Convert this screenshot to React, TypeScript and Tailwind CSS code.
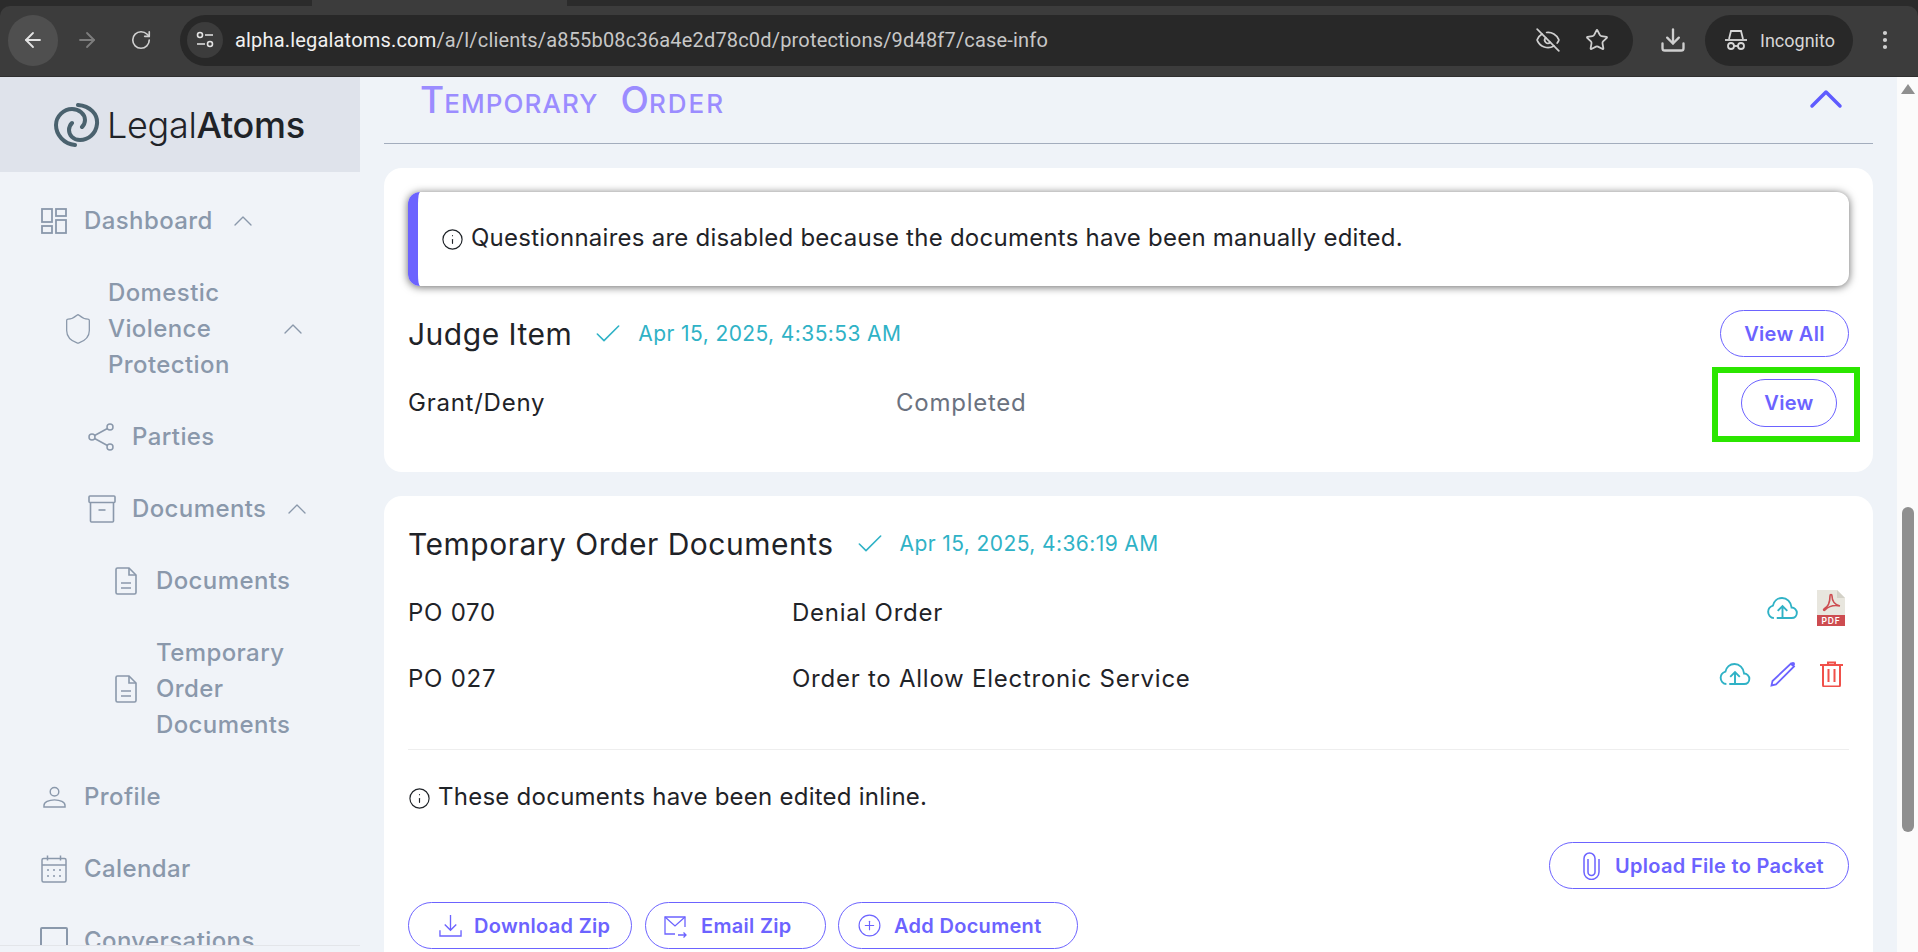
import React from 'react';
import { ArrowLeft, ArrowRight, Check, ChevronUp, Download, EyeOff, Info, MoreVertical, PlusCircle, RotateCw, Shield, Star } from 'lucide-react';

type IconProps = { className?: string };

function DashboardIcon({ className }: IconProps) {
  return (
    <svg viewBox="0 0 26 26" fill="none" stroke="currentColor" strokeWidth="1.8" className={className}>
      <rect x="1" y="1" width="10" height="13" />
      <rect x="15" y="1" width="10" height="7" />
      <rect x="1" y="18" width="10" height="7" />
      <rect x="15" y="12" width="10" height="13" />
    </svg>
  );
}

function PartiesIcon({ className }: IconProps) {
  return (
    <svg viewBox="0 0 26 28" fill="none" stroke="currentColor" strokeWidth="1.5" className={className}>
      <circle cx="4" cy="14" r="3" />
      <circle cx="22" cy="4" r="3" />
      <circle cx="22" cy="24" r="3" />
      <path d="M6.600 12.500L19.400 5.500M6.600 15.500L19.400 22.500" />
    </svg>
  );
}

function ArchiveIcon({ className }: IconProps) {
  return (
    <svg viewBox="0 0 28 28" fill="none" stroke="currentColor" strokeWidth="1.6" className={className}>
      <rect x="1" y="1" width="26" height="6.500" rx="1" />
      <path d="M2.500 7.500V26a1 1 0 0 0 1 1h21a1 1 0 0 0 1-1V7.500" />
      <path d="M10.500 15h7" />
    </svg>
  );
}

function DocIcon({ className }: IconProps) {
  return (
    <svg viewBox="0 0 22 28" fill="none" stroke="currentColor" strokeWidth="1.6" className={className}>
      <path d="M14 1H2.500A1.500 1.500 0 0 0 1 2.500v23A1.500 1.500 0 0 0 2.500 27h17a1.500 1.500 0 0 0 1.500-1.500V8z" />
      <path d="M14 1v7h7" />
      <path d="M6 16h10M6 21h10" />
    </svg>
  );
}

function ProfileIcon({ className }: IconProps) {
  return (
    <svg viewBox="0 0 24 23" fill="none" stroke="currentColor" strokeWidth="1.5" className={className}>
      <circle cx="12" cy="6" r="4.500" />
      <path d="M1 22v-1.500C1 17 6 14.500 12 14.500s11 2.500 11 6V22z" />
    </svg>
  );
}

function CalendarIcon({ className }: IconProps) {
  return (
    <svg viewBox="0 0 26 28" fill="none" stroke="currentColor" strokeWidth="1.5" className={className}>
      <rect x="1" y="3.500" width="24" height="23.500" rx="1.500" />
      <path d="M1 10h24M6.500 0.500v5M19.500 0.500v5" />
      <path d="M7 15h.01M13 15h.01M19 15h.01M7 21h.01M13 21h.01M19 21h.01" strokeWidth="2" strokeLinecap="round" />
    </svg>
  );
}

function Logo() {
  return (
    <svg viewBox="0 0 46 44" fill="none" stroke="#4a626e" strokeWidth="4" strokeLinecap="round" className="w-[46px] h-[44px]">
      <path d="M24 2C36 3 44 11 43 21C42 31 34 37 26 37C19 37 15 32 15 27C15 24 16 22 18 20" />
      <path d="M21 42C10 41 2 32 2 22C2 13 10 6 18 6C25 6 31 11 31 17C31 20 30 22 28 24" />
    </svg>
  );
}

function CloudIcon({ className }: IconProps) {
  return (
    <svg viewBox="0 0 32 23" fill="none" stroke="#2fb2c6" strokeWidth="2" className={className}>
      <path d="M10 22H25.500C29 22 31 19.500 31 16.500C31 13.500 28.500 11 25.500 11C25 5 20.500 1 15.500 1C10.500 1 7 4.500 6 9C3 10 1 12.500 1 15.500C1 19 3.500 22 7 22" />
      <path d="M16 22V10M11 14.500L16 9.500L21 14.500" />
    </svg>
  );
}

function PenIcon({ className }: IconProps) {
  return (
    <svg viewBox="0 0 26 26" fill="none" stroke="#6c63ff" strokeWidth="1.800" className={className}>
      <path d="M21 2.500L24 5.500L6 23.500L1.500 24.500L2.500 20z" />
      <circle cx="23" cy="3" r="2" fill="#6c63ff" stroke="none" />
    </svg>
  );
}

function TrashIcon({ className }: IconProps) {
  return (
    <svg viewBox="0 0 23 26" fill="none" stroke="#f0504a" strokeWidth="2" className={className}>
      <path d="M0 4H23M8 4V1.500H15V4" />
      <path d="M3 4V24a1.500 1.500 0 0 0 1.500 1.500H18.500a1.500 1.500 0 0 0 1.500-1.500V4" />
      <path d="M8.500 8V21M14.500 8V21" />
    </svg>
  );
}

function ClipIcon({ className }: IconProps) {
  return (
    <svg viewBox="0 0 17 28" fill="none" stroke="currentColor" strokeWidth="1.500" className={className}>
      <path d="M16 7V20a7.500 7.500 0 0 1-15 0V6.500a5.500 5.500 0 0 1 11 0V20a3.500 3.500 0 0 1-7 0V7" />
    </svg>
  );
}

function PdfIcon() {
  return (
    <svg viewBox="0 0 28 36" className="w-[28px] h-[36px]">
      <path d="M0 0h20l8 8v28H0z" fill="#e8e6de" />
      <path d="M20 0l8 8h-8z" fill="#d3d1c7" />
      <rect y="25" width="28" height="11" fill="#cd4c50" />
      <path d="M7 19c4-2 6-6 6-13 0-2 2-2 2 0 0 5 3 9 8 10-5-1-11 0-15 4-1 1-2 0-1-1z" fill="none" stroke="#cd4c50" strokeWidth="1.600" />
      <text x="14" y="34" textAnchor="middle" fill="#fff" fontSize="8.500" fontWeight="600" fontFamily="Inter, sans-serif">PDF</text>
    </svg>
  );
}

function EmailZipIcon({ className }: IconProps) {
  return (
    <svg viewBox="0 0 24 24" fill="none" stroke="currentColor" strokeWidth="1.300" className={className}>
      <path d="M12 20H2V3h20v10" />
      <path d="M2 3l10 9 10-9" />
      <path d="M15 21h8M20.500 18.500L23 21l-2.500 2.500" />
    </svg>
  );
}

function DownloadZipIcon({ className }: IconProps) {
  return (
    <svg viewBox="0 0 24 24" fill="none" stroke="currentColor" strokeWidth="1.400" className={className}>
      <path d="M12 1v16M6 11l6 6 6-6" />
      <path d="M1 17v6h22v-6" />
    </svg>
  );
}

function TuneIcon() {
  return (
    <svg viewBox="0 0 20 20" fill="none" stroke="#e3e3e3" strokeWidth="1.600" className="w-[20px] h-[20px]">
      <circle cx="5" cy="5" r="2.500" />
      <path d="M10 5h8M2 14h8" />
      <circle cx="15" cy="14" r="2.500" />
    </svg>
  );
}

function IncognitoIcon() {
  return (
    <svg viewBox="0 0 24 24" fill="none" stroke="#d6d6d6" strokeWidth="1.800" className="w-[24px] h-[24px]">
      <path d="M1 12h22" />
      <path d="M5 11l2-8h10l2 8" />
      <circle cx="7" cy="18" r="3" />
      <circle cx="17" cy="18" r="3" />
      <path d="M10 18h4" />
    </svg>
  );
}

const navText = 'text-[24px] leading-[36px] font-medium tracking-[0.4px]';
const btn = 'flex items-center rounded-full border border-[#6c63ff] text-[#6c63ff] text-[20px] font-semibold tracking-[0.3px] h-[47px] bg-white';
const dateText = 'text-[21px] tracking-[0.4px] text-[#2fb2c6]';
const rowText = 'text-[24px] tracking-[0.75px] text-[#1f2328]';
const noteText = 'text-[24px] tracking-[0.25px] text-[#1f2328]';
const titleText = 'text-[30px] leading-[40px] tracking-[0.5px] text-[#1f2328]';

type NavRowProps = { icon: React.ReactNode; label: string; indent: string; iconBox: string; chevron?: string; textWidth?: string };

function NavRow({ icon, label, indent, iconBox, chevron, textWidth }: NavRowProps) {
  return (
    <div className={`flex items-center py-[18px] ${indent}`}>
      <div className={`${iconBox} shrink-0 flex items-center`}>{icon}</div>
      <div className={`${navText} ${textWidth ?? ''}`}>{label}</div>
      {chevron && <ChevronUp className={`w-[32px] h-[32px] ${chevron}`} strokeWidth={1} />}
    </div>
  );
}

function Sidebar() {
  return (
    <div className="w-[360px] shrink-0 h-[875px] flex flex-col text-[#8a98ab]">
      <div className="h-[95px] shrink-0 bg-[#dfe3eb] flex items-center pl-[54px] gap-[7px]">
        <Logo />
        <div className="text-[36px] tracking-[-0.3px] text-[#1f2328]">
          <span className="font-light">Legal</span><span className="font-medium">Atoms</span>
        </div>
      </div>
      <div className="h-[774px] overflow-hidden border-b border-[#e3e5e9] pt-[13px]">
        <NavRow indent="pl-[41px]" iconBox="w-[43px]" label="Dashboard" chevron="ml-[14px]" icon={<DashboardIcon className="w-[26px] h-[26px]" />} />
        <NavRow indent="pl-[61px]" iconBox="w-[47px]" label="Domestic Violence Protection" textWidth="w-[156px]" chevron="ml-[13px]" icon={<Shield className="w-[34px] h-[34px]" strokeWidth={0.900} />} />
        <NavRow indent="pl-[88px]" iconBox="w-[44px]" label="Parties" icon={<PartiesIcon className="w-[26px] h-[28px]" />} />
        <NavRow indent="pl-[88px]" iconBox="w-[44px]" label="Documents" chevron="ml-[15px]" icon={<ArchiveIcon className="w-[28px] h-[28px]" />} />
        <NavRow indent="pl-[115px]" iconBox="w-[41px]" label="Documents" icon={<DocIcon className="w-[22px] h-[28px]" />} />
        <NavRow indent="pl-[115px]" iconBox="w-[41px]" label="Temporary Order Documents" textWidth="w-[140px]" icon={<DocIcon className="w-[22px] h-[28px]" />} />
        <NavRow indent="pl-[43px]" iconBox="w-[41px]" label="Profile" icon={<ProfileIcon className="w-[23px] h-[22px]" />} />
        <NavRow indent="pl-[41px]" iconBox="w-[43px]" label="Calendar" icon={<CalendarIcon className="w-[26px] h-[28px]" />} />
        <div className="flex items-center py-[18px] pl-[40px]">
          <div className="w-[44px] shrink-0">
            <div className="w-[28px] h-[28px] border-2 border-[#8a98ab] rounded-[2px]" />
          </div>
          <div className={navText}>Conversations</div>
        </div>
      </div>
    </div>
  );
}

function BrowserBar() {
  return (
    <div className="h-[77px] bg-[#2b2b2b] flex flex-col shrink-0 [font-family:Roboto,sans-serif]">
      <div className="h-[6px] flex">
        <div className="w-[312px] bg-[#2b2b2b]" />
        <div className="w-[255px] bg-[#3c3c3c]" />
        <div className="flex-1 bg-[#2b2b2b]" />
      </div>
      <div className="h-[71px] bg-[#3c3c3c] rounded-t-[10px] flex items-center border-b border-[#2f2f2f] pl-[8px] pb-[2px]">
        <div className="w-[50px] h-[51px] rounded-full bg-[#4f4f4f] flex items-center justify-center">
          <ArrowLeft className="w-[24px] h-[24px] text-[#e3e3e3]" strokeWidth={1.800} />
        </div>
        <ArrowRight className="w-[24px] h-[24px] text-[#7d7d7d] ml-[17px]" strokeWidth={1.800} />
        <RotateCw className="w-[22px] h-[22px] text-[#d0d0d0] ml-[31px]" strokeWidth={1.800} />
        <div className="ml-[28px] w-[1453px] h-[51px] rounded-full bg-[#282828] flex items-center pl-[7px]">
          <div className="w-[36px] h-[36px] rounded-full bg-[#3c3c3c] flex items-center justify-center">
            <TuneIcon />
          </div>
          <div className="ml-[12px] text-[20px] tracking-[0.18px] text-[#c7c7c7] flex-1 whitespace-nowrap">
            <span className="text-[#f0f0f0]">alpha.legalatoms.com</span>/a/l/clients/a855b08c36a4e2d78c0d/protections/9d48f7/case-info
          </div>
          <EyeOff className="w-[26px] h-[26px] text-[#cfcfcf]" strokeWidth={1.600} />
          <Star className="w-[24px] h-[24px] text-[#cfcfcf] ml-[24px] mr-[24px]" strokeWidth={1.800} />
        </div>
        <Download className="w-[28px] h-[28px] text-[#cfcfcf] ml-[26px]" strokeWidth={2} />
        <div className="ml-[18px] w-[148px] h-[51px] rounded-full bg-[#282828] flex items-center pl-[19px] gap-[12px] text-[18px] text-[#d6d6d6]">
          <IncognitoIcon />
          Incognito
        </div>
        <MoreVertical className="w-[24px] h-[24px] text-[#cfcfcf] ml-[20px]" strokeWidth={2.200} />
      </div>
    </div>
  );
}

function Main() {
  return (
    <div className="flex-1 h-[875px] overflow-hidden bg-[#eff3f8] px-[24px]">
      <div className="h-[67px] border-b border-[#a3adbd] flex items-start justify-between pl-[36px] pr-[19px]">
        <div className="flex items-baseline leading-[44px] font-medium text-[#9b8cff] pt-[1px]">
          <span className="text-[37px]">T</span>
          <span className="text-[26px] uppercase tracking-[1.100px]">emporary</span>
          <span className="text-[37px] ml-[22px]">O</span>
          <span className="text-[26px] uppercase tracking-[2px]">rder</span>
        </div>
        <ChevronUp className="w-[56px] h-[56px] text-[#5f5bff] mt-[-6px]" strokeWidth={1.500} />
      </div>

      <div className="mt-[24px] bg-white rounded-[18px] px-[24px] pt-[24px] pb-[45px]">
        <div className={`h-[94px] rounded-[12px] border-l-[10px] border-[#6c63ff] shadow-[0_1px_8px_rgba(0,0,0,0.6)] flex items-center pl-[23px] pb-[2px] ${noteText}`}>
          <Info className="w-[23px] h-[23px] mr-[7px] mt-[3px]" strokeWidth={1.200} />
          Questionnaires are disabled because the documents have been manually edited.
        </div>

        <div className="mt-[24px] flex items-center justify-between">
          <div className="flex items-center">
            <div className={titleText}>Judge Item</div>
            <Check className="w-[32px] h-[32px] text-[#2fb2c6] ml-[20px]" strokeWidth={1.200} />
            <div className={`${dateText} ml-[14px]`}>Apr 15, 2025, 4:35:53 AM</div>
          </div>
          <div className={`${btn} justify-center w-[129px]`}>View All</div>
        </div>

        <div className={`mt-[22px] flex items-center ${rowText}`}>
          <div className="w-[488px]">Grant/Deny</div>
          <div className="flex-1 text-[#6b7280]">Completed</div>
          <div className="relative mr-[12px]">
            <div className={`${btn} justify-center w-[96px] h-[48px]`}>View</div>
            <div className="absolute left-[-29px] right-[-23px] top-[-12px] bottom-[-15px] border-[6px] border-[#2be600]" />
          </div>
        </div>
      </div>

      <div className="mt-[24px] bg-white rounded-t-[18px] px-[24px] pt-[28px]">
        <div className="flex items-center">
          <div className={titleText}>Temporary Order Documents</div>
          <Check className="w-[32px] h-[32px] text-[#2fb2c6] ml-[20px]" strokeWidth={1.200} />
          <div className={`${dateText} ml-[14px]`}>Apr 15, 2025, 4:36:19 AM</div>
        </div>

        <div className={`mt-[16px] h-[65px] flex items-center ${rowText}`}>
          <div className="w-[384px]">PO 070</div>
          <div className="flex-1">Denial Order</div>
          <div className="flex items-center mb-[10px] mr-[4px] gap-[19px]">
            <CloudIcon className="w-[31px] h-[22px]" />
            <PdfIcon />
          </div>
        </div>
        <div className={`h-[67px] flex items-center ${rowText}`}>
          <div className="w-[384px]">PO 027</div>
          <div className="flex-1">Order to Allow Electronic Service</div>
          <div className="flex items-center mb-[10px] mr-[6px]">
            <CloudIcon className="w-[32px] h-[22px]" />
            <PenIcon className="w-[26px] h-[26px] ml-[19px]" />
            <TrashIcon className="w-[23px] h-[26px] ml-[24px]" />
          </div>
        </div>

        <div className={`mt-[37px] border-t border-[#eeeeee] pt-[31px] flex items-center leading-[32px] ${noteText}`}>
          <Info className="w-[23px] h-[23px] mr-[7px] mt-[2px]" strokeWidth={1.200} />
          These documents have been edited inline.
        </div>

        <div className="mt-[29px] flex justify-end">
          <div className={`${btn} w-[300px] pl-[33px] gap-[15px]`}>
            <ClipIcon className="w-[17px] h-[28px]" />
            Upload File to Packet
          </div>
        </div>

        <div className="mt-[13px] flex pb-[8px]">
          <div className={`${btn} w-[224px] pl-[30px] gap-[12px]`}>
            <DownloadZipIcon className="w-[23px] h-[23px]" />
            Download Zip
          </div>
          <div className={`${btn} w-[181px] ml-[13px] pl-[17px] gap-[14px]`}>
            <EmailZipIcon className="w-[24px] h-[24px]" />
            Email Zip
          </div>
          <div className={`${btn} w-[240px] ml-[12px] pl-[18px] gap-[12px]`}>
            <PlusCircle className="w-[25px] h-[25px]" strokeWidth={1.100} />
            Add Document
          </div>
        </div>
      </div>
    </div>
  );
}

function PageScrollbar() {
  return (
    <div className="w-[21px] shrink-0 h-[875px] bg-[#fbfbfb] flex flex-col items-center">
      <div className="mt-[7px] w-0 h-0 border-l-[7px] border-r-[7px] border-b-[10px] border-l-transparent border-r-transparent border-b-[#8f8f8f]" />
      <div className="mt-[413px] w-[12px] h-[325px] rounded-[6px] bg-[#8f8f8f]" />
    </div>
  );
}

export default function App() {
  return (
    <div className="h-[952px] w-[1918px] overflow-hidden flex flex-col bg-[#f0f3f8] [font-family:Inter,sans-serif]">
      <BrowserBar />
      <div className="flex">
        <Sidebar />
        <Main />
        <PageScrollbar />
      </div>
    </div>
  );
}
